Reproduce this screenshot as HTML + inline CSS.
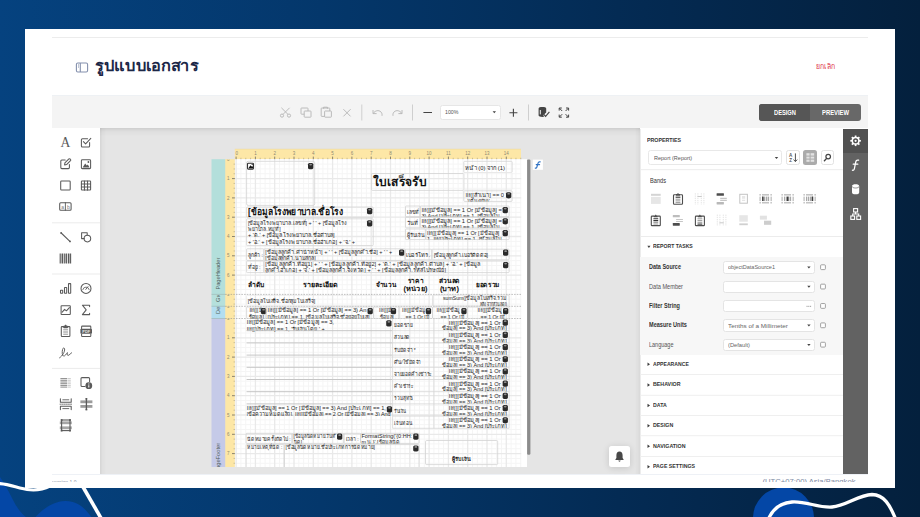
<!DOCTYPE html>
<html><head><meta charset="utf-8"><title>รูปแบบเอกสาร</title>
<style>
html,body{margin:0;padding:0}
body{width:920px;height:517px;overflow:hidden;position:relative;font-family:"Liberation Sans",sans-serif;background:linear-gradient(90deg,#05427f 0%,#04376b 35%,#042a52 70%,#04203d 100%)}
.b,.t,svg.a{position:absolute}
.b{box-sizing:border-box}
.t{line-height:1;white-space:nowrap;transform-origin:0 0}
svg.a{left:0;top:0;overflow:visible}
</style></head><body>
<svg class="a" width="920" height="517" viewBox="0 0 920 517"><path d="M0 477C6 486 9 492 13 500C17 508 22 515 30 520L0 520Z" fill="#0447a6"/><path d="M33 520C41 510 52 501.5 65 501C78 500.6 86 509 93.5 520Z" fill="#0447a6"/><path d="M-2 483.5C10 483.8 18 488.5 30 489.8C38 490.5 44 489 50 486" fill="none" stroke="#fff" stroke-width="3.1"/><path d="M82.5 486L101.5 519" fill="none" stroke="#fff" stroke-width="3.6"/><circle cx="783.5" cy="518" r="30.5" fill="#0447a6"/><path d="M768 520C772 510 780 503 792 502C806 501 818 508 832 507C846 506 858 495 872 494.5C884 494.5 890 505 896 520" fill="none" stroke="#fff" stroke-width="3.3"/></svg>
<div class="b" style="left:25px;top:28.5px;width:870px;height:459.5px;background:#fff"></div>
<div class="b" style="left:52px;top:36.6px;width:816px;height:1px;background:#ececec"></div>
<svg class="a" width="920" height="517" viewBox="0 0 920 517"><g fill="none" stroke="#8490ad" stroke-width="1.1"><rect x="76.4" y="63" width="11.2" height="9" rx="1.4"/><path d="M80.3 63V72M78 65H79M78 67H79"/></g></svg>
<svg class="a" width="920" height="517" viewBox="0 0 920 517" aria-label="รูปแบบเอกสาร"><text x="95.2" y="71.3" font-family="'Liberation Sans',sans-serif" font-size="15.4" font-weight="700" fill="#1c2747" textLength="103" lengthAdjust="spacingAndGlyphs">รูปแบบเอกสาร</text></svg>
<svg class="a" width="920" height="517" viewBox="0 0 920 517" aria-label="ยกเลิก"><text x="816.3" y="68.7" font-family="'Liberation Sans',sans-serif" font-size="7.4" fill="#dd2f46" textLength="18.6" lengthAdjust="spacingAndGlyphs">ยกเลิก</text></svg>
<div class="b" style="left:52px;top:95.1px;width:816px;height:33.3px;background:#f4f4f4;border-top:1px solid #eef1f4"></div>
<svg class="a" width="920" height="517" viewBox="0 0 920 517"><g fill="none" stroke="#b4b4b4" stroke-width="0.9"><circle cx="282" cy="115.6" r="1.6"/><circle cx="289" cy="115.6" r="1.6"/><path d="M283 114.4L289.6 107.8M288 114.4L281.4 107.8"/></g><g fill="none" stroke="#b4b4b4" stroke-width="0.9"><rect x="304.2" y="111" width="6.8" height="6.2" rx="0.6"/><path d="M304.2 114.2H301.6Q301 114.2 301 113.6V108.6Q301 108 301.6 108H307.4Q308 108 308 108.6V111"/></g><g fill="none" stroke="#b4b4b4" stroke-width="0.9"><rect x="324.6" y="111" width="6.8" height="6.2" rx="0.6"/><path d="M324.6 116.4H321.8Q321.2 116.4 321.2 115.8V108.6Q321.2 108 321.8 108H329.2Q329.8 108 329.8 108.6V111M323.6 108.8V107.2H327.4V108.8"/></g><path d="M343.4 109.2L350.6 116.4M350.6 109.2L343.4 116.4" fill="none" stroke="#b4b4b4" stroke-width="0.9"/><path d="M361.8 104.5V120.5M412.5 104.5V120.5M528.5 104.5V120.5" stroke="#cfcfcf" stroke-width="1"/><g fill="none" stroke="#b4b4b4" stroke-width="0.9"><path d="M373 110V113.6H376.6M373.2 113.4C375 110.6 378.6 109.6 381 112C382 113 382.2 114.4 382 115.8"/><path d="M402 110V113.6H398.4M401.8 113.4C400 110.6 396.4 109.6 394 112C393 113 392.8 114.4 393 115.8"/></g><path d="M423.4 112.5H432M509.4 112.7H517.4M513.4 108.7V116.7" stroke="#444" stroke-width="1.1" fill="none"/><g fill="#444"><path d="M538.6 108.4C538.6 107.5 540.4 107 542.4 107S546.2 107.5 546.2 108.4V112.4L543.2 115.2L544.4 116.6C543.8 116.8 543.1 116.9 542.4 116.9C540.4 116.9 538.6 116.4 538.6 115.5Z"/></g><path d="M540.3 110V114.4" stroke="#f5f5f5" stroke-width="1"/><path d="M543.8 114.4L545.6 116.4L549.4 111.8" fill="none" stroke="#444" stroke-width="1.1"/><g fill="none" stroke="#444" stroke-width="1"><path d="M559.2 110.6V108H561.8M559.4 108.2L562.2 111M568.6 110.6V108H566M568.4 108.2L565.6 111M559.2 114.6V117.2H561.8M559.4 117L562.2 114.2M568.6 114.6V117.2H566M568.4 117L565.6 114.2"/></g></svg>
<div class="b" style="left:440.2px;top:104.5px;width:60.4px;height:15.8px;background:#fff;border:1px solid #e6e6e6;border-radius:2.5px"></div>
<div class="t" style="left:445.2px;top:109.69px;font-size:5.8px;color:#555;transform:scaleX(0.903);">100%</div>
<svg class="a" width="920" height="517" viewBox="0 0 920 517"><path d="M492.6 111.2H496L494.3 113.2Z" fill="#444"/></svg>
<div class="b" style="left:759px;top:104.1px;width:102.1px;height:17.1px;background:#686868;border-radius:3px;overflow:hidden"><div class="b" style="left:0;top:0;width:51px;height:17.1px;background:#565656"></div></div>
<div class="t" style="left:773.5px;top:109.51px;font-size:6.6px;color:#fff;font-weight:700;transform:scaleX(0.869);">DESIGN</div>
<div class="t" style="left:822.2px;top:109.51px;font-size:6.6px;color:#fff;font-weight:700;transform:scaleX(0.89);">PREVIEW</div>
<div class="b" style="left:52px;top:128.5px;width:48.4px;height:345.2px;background:#fff"></div>
<svg class="a" width="920" height="517" viewBox="0 0 920 517"><path d="M52 222.8H100M52 274H100M52 368.4H100" stroke="#ebebeb" stroke-width="1"/><text x="65.5" y="147.4" font-family="Liberation Serif,serif" font-size="13.6" text-anchor="middle" fill="#5a5a5a">A</text><g fill="none" stroke="#5a5a5a" stroke-width="1.05" stroke-linejoin="round" stroke-linecap="round"><path d="M89.6 142.6V146Q89.6 147 88.6 147H82.4Q81.4 147 81.4 146V139.8Q81.4 138.8 82.4 138.8H87.6"/><path d="M83.4 141.6L85.6 143.9L90.8 138.4"/><path d="M69.4 164.4V167.6Q69.4 168.6 68.4 168.6H61.8Q60.8 168.6 60.8 167.6V161Q60.8 160 61.8 160H65.2"/><path d="M64.6 165L64.9 162.9L68.9 158.9Q69.5 158.5 70.1 159L70.6 159.5Q71 160.1 70.5 160.7L66.6 164.6Z"/><rect x="81.4" y="159.8" width="9.2" height="8.8" rx="0.9"/><rect x="60.7" y="180.9" width="9.5" height="9.2" rx="0.8"/><rect x="81.4" y="180.9" width="9.2" height="9.2" rx="0.6"/><path d="M84.45 180.9V190.1M87.55 180.9V190.1M81.4 183.95H90.6M81.4 187.05H90.6"/><rect x="59.7" y="202.7" width="11.4" height="7.6" rx="1"/><path d="M65.4 202.7V210.3" stroke-width="0.9"/><path d="M61.2 233L69.9 241.3"/><path d="M84.2 238.6H81.6V232.8H87.2V235"/><circle cx="87.4" cy="238.6" r="3.3"/><rect x="60.5" y="290.2" width="2.2" height="3" rx="0.3"/><rect x="64.5" y="287.4" width="2.2" height="5.8" rx="0.3"/><rect x="68.5" y="283.6" width="2.2" height="9.6" rx="0.3"/><circle cx="86" cy="288.4" r="5"/><path d="M82.8 289.6A3.3 3.3 0 0 1 89.2 289.6" stroke-width="0.8"/><path d="M85.8 289.4L88 286.6" stroke-width="0.9"/><rect x="61.1" y="305.7" width="9.2" height="8.7" rx="0.5"/><path d="M62.2 312.2L64.6 309.4L66.4 310.8L69.4 307.6"/><path d="M89.6 306.6V305.2H82.4L86.2 309.9L82.4 314.6H89.6V313.2"/><path d="M63.6 326.6H62Q61.3 326.6 61.3 327.3V335.8Q61.3 336.5 62 336.5H69.2Q69.9 336.5 69.9 335.8V327.3Q69.9 326.6 69.2 326.6H67.6"/><path d="M63.8 327.6V326.2H64.8L65.6 325.2L66.4 326.2H67.4V327.6Z" fill="#5a5a5a"/><path d="M63.6 329.6H67.6M63.6 331.2H67.6M63.6 332.8H67.6M63.6 334.4H67.6" stroke="#8a8a8a" stroke-width="0.7"/><path d="M81.6 328.6V326.8Q81.6 326.1 82.3 326.1H90.1Q90.8 326.1 90.8 326.8V328.6M81.6 334V335.8Q81.6 336.5 82.3 336.5H90.1Q90.8 336.5 90.8 335.8V334"/><path d="M59.6 357.8C62.4 356 65 351.6 64.6 349C64.4 347.6 63 347.6 62.6 349.4C62 352 62 355.4 63.4 356C64.8 356.6 66.6 353.6 67.4 352.6C67.2 354 67.2 355.6 68.2 355.4C69.4 355 70.4 353.6 71.6 352.8" stroke-width="0.95"/><path d="M85 386.4H82Q81 386.4 81 385.4V378.6Q81 377.6 82 377.6H88.6Q89.6 377.6 89.6 378.6V381.6"/><path d="M60.4 398.8V402.2H71.2V398.8M60.4 409.6V406.2H71.2V409.6"/><path d="M62.8 399.8H68.8M62.8 408.6H68.8" stroke-width="0.9"/><path d="M60 404.2H71.6" stroke-dasharray="1.1 1" stroke-width="0.8"/></g><path d="M82.6 167.4L85.2 163.6L86.8 165.6L87.8 164.6L89.6 167.4Z" fill="#5a5a5a"/><circle cx="88.4" cy="162" r="0.9" fill="#5a5a5a"/><text x="62.6" y="208.6" font-family="Liberation Sans,sans-serif" font-size="5" text-anchor="middle" fill="#777">a</text><text x="68.3" y="208.6" font-family="Liberation Sans,sans-serif" font-size="5" text-anchor="middle" fill="#777">b</text><circle cx="61.1" cy="232.9" r="0.9" fill="#5a5a5a"/><circle cx="70" cy="241.4" r="0.9" fill="#5a5a5a"/><path d="M60.2 253.6V263.4M62.5 253.6V263.4M64.3 253.6V263.4M66.6 253.6V263.4M68.5 253.6V263.4M70.6 253.6V263.4" stroke="#5a5a5a" stroke-width="1.1" fill="none"/><path d="M61.4 253.6V263.4M65.5 253.6V263.4M69.6 253.6V263.4" stroke="#5a5a5a" stroke-width="0.5" fill="none"/><rect x="80.4" y="328.8" width="11.6" height="5" rx="0.8" fill="#5a5a5a"/><text x="86.2" y="332.9" font-family="Liberation Sans,sans-serif" font-weight="700" font-size="3.9" text-anchor="middle" fill="#e8e8e8">PDF</text><path d="M60.4 378.6H67M60.4 380.3H67M60.4 382H67M60.4 383.7H67M60.4 385.4H67M60.4 387.1H67" stroke="#7c7c7c" stroke-width="0.9"/><path d="M67.4 378.6H70.8M67.4 380.3H70.8M67.4 382H70.8M67.4 383.7H70.8M67.4 385.4H70.8M67.4 387.1H70.8" stroke="#c4c4c4" stroke-width="0.9"/><circle cx="88.8" cy="385.7" r="3.4" fill="#5a5a5a"/><path d="M88.8 383.6V384.4M88.8 385.2V387.6" stroke="#fff" stroke-width="1.05"/><rect x="80.4" y="400.4" width="12" height="2.8" fill="#9b9b9b"/><rect x="80.4" y="405" width="12" height="2.8" fill="#9b9b9b"/><path d="M86.4 398.4V410" stroke="#5a5a5a" stroke-width="1.3"/><rect x="85.5" y="398" width="1.8" height="1.6" fill="#5a5a5a"/><rect x="85.5" y="408.8" width="1.8" height="1.6" fill="#5a5a5a"/><rect x="59.8" y="421.4" width="12" height="2.8" fill="#a6a6a6"/><rect x="59.8" y="426.4" width="12" height="2.8" fill="#a6a6a6"/><rect x="61.6" y="420" width="8.4" height="10.6" fill="none" stroke="#5a5a5a" stroke-width="1.1"/><rect x="60.7" y="419.1" width="1.8" height="1.8" fill="#5a5a5a"/><rect x="60.7" y="429.7" width="1.8" height="1.8" fill="#5a5a5a"/><rect x="69.1" y="419.1" width="1.8" height="1.8" fill="#5a5a5a"/><rect x="69.1" y="429.7" width="1.8" height="1.8" fill="#5a5a5a"/></svg>
<div class="b" style="left:640.4px;top:128.5px;width:202.5px;height:345.2px;background:#fff;border-left:1px solid #ececec"></div>
<div class="b" style="left:842.9px;top:128.5px;width:25.1px;height:345.2px;background:#626262"><div class="b" style="left:0;top:0;width:25.1px;height:24px;background:#515151"></div></div>
<div class="b" style="left:648.3px;top:150.3px;width:134.2px;height:14.4px;background:#fff;border:1px solid #e8e8e8;border-radius:2.5px"></div>
<div class="b" style="left:785.8px;top:150.3px;width:13.8px;height:14.4px;background:#fff;border:1px solid #e2e2e2;border-radius:2.5px"></div>
<div class="b" style="left:803.4px;top:150.3px;width:13.8px;height:14.4px;background:#ababab;border-radius:2.5px"></div>
<div class="b" style="left:820.5px;top:150.3px;width:13.8px;height:14.4px;background:#fff;border:1px solid #e2e2e2;border-radius:2.5px"></div>
<div class="b" style="left:640.4px;top:257.3px;width:202.5px;height:97.6px;background:#f7f7f7"></div>
<div class="b" style="left:722.5px;top:261.2px;width:92.7px;height:12.4px;background:#fff;border:1px solid #e4e4e4;border-radius:2.5px"></div>
<div class="t" style="left:648.8px;top:264.27px;font-size:6.3px;color:#333;font-weight:700;transform:scaleX(0.87);">Data Source</div>
<div class="t" style="left:727.5px;top:264.42px;font-size:6px;color:#666;transform:scaleX(0.921);">objectDataSource1</div>
<div class="b" style="left:722.5px;top:280.57px;width:92.7px;height:12.4px;background:#fff;border:1px solid #e4e4e4;border-radius:2.5px"></div>
<div class="t" style="left:648.8px;top:283.64px;font-size:6.3px;color:#555;transform:scaleX(0.891);">Data Member</div>
<div class="b" style="left:722.5px;top:299.94px;width:92.7px;height:12.4px;background:#fff;border:1px solid #e4e4e4;border-radius:2.5px"></div>
<div class="t" style="left:648.8px;top:303.01px;font-size:6.3px;color:#333;font-weight:700;transform:scaleX(0.877);">Filter String</div>
<div class="b" style="left:722.5px;top:319.31px;width:92.7px;height:12.4px;background:#fff;border:1px solid #e4e4e4;border-radius:2.5px"></div>
<div class="t" style="left:648.8px;top:322.38px;font-size:6.3px;color:#333;font-weight:700;transform:scaleX(0.882);">Measure Units</div>
<div class="t" style="left:727.5px;top:322.53px;font-size:6px;color:#666;transform:scaleX(1.058);">Tenths of a Millimeter</div>
<div class="b" style="left:722.5px;top:338.68px;width:92.7px;height:12.4px;background:#fff;border:1px solid #e4e4e4;border-radius:2.5px"></div>
<div class="t" style="left:648.8px;top:341.75px;font-size:6.3px;color:#555;transform:scaleX(0.874);">Language</div>
<div class="t" style="left:727.5px;top:341.9px;font-size:6px;color:#666;transform:scaleX(0.956);">(Default)</div>
<svg class="a" width="920" height="517" viewBox="0 0 920 517"><g stroke="#fff" stroke-width="1.7" fill="none"><path d="M858.80 140.80L860.90 140.80" /><path d="M857.86 143.06L859.35 144.55" /><path d="M855.60 144.00L855.60 146.10" /><path d="M853.34 143.06L851.85 144.55" /><path d="M852.40 140.80L850.30 140.80" /><path d="M853.34 138.54L851.85 137.05" /><path d="M855.60 137.60L855.60 135.50" /><path d="M857.86 138.54L859.35 137.05" /></g><circle cx="855.6" cy="140.8" r="3.3" fill="none" stroke="#fff" stroke-width="1.5"/><circle cx="855.6" cy="140.8" r="1.1" fill="#fff"/><path d="M858.6 160.2C856.6 159.6 855.9 160.8 855.6 162.6L854.4 168.6C854.1 170 853.4 170.6 852.4 170.2M853.2 164.2H857.8" fill="none" stroke="#fff" stroke-width="1.25" stroke-linecap="round"/><path d="M852 186.2C852 184.9 853.6 184.3 855.6 184.3S859.2 184.9 859.2 186.2V192.4C859.2 193.7 857.6 194.3 855.6 194.3S852 193.7 852 192.4Z" fill="#fff"/><path d="M852 186.4C852.4 187.6 854 188 855.6 188S858.8 187.6 859.2 186.4" fill="none" stroke="#626262" stroke-width="0.7"/><g fill="none" stroke="#fff" stroke-width="1.1"><rect x="853.6" y="208.6" width="4" height="3.4"/><rect x="850.8" y="216" width="3.8" height="3.4"/><rect x="856.8" y="216" width="3.8" height="3.4"/><path d="M855.6 212V214H852.7V216M855.6 214H858.7V216"/></g><path d="M774.8 156.9H778.2L776.5 158.9Z" fill="#444"/><text x="789.1" y="157.2" font-family="Liberation Sans,sans-serif" font-size="4.6" font-weight="700" fill="#555">A</text><text x="789.2" y="162.2" font-family="Liberation Sans,sans-serif" font-size="4.6" font-weight="700" fill="#555">Z</text><path d="M795.4 153.4V161.4M793.6 159.6L795.4 161.6L797.2 159.6" fill="none" stroke="#444" stroke-width="0.95"/><g fill="#e2e2e2"><rect x="806.4" y="153.2" width="3.2" height="2.4"/><rect x="810.6" y="153.2" width="3.6" height="2.4"/><rect x="806.4" y="156.6" width="3.2" height="2"/><rect x="810.6" y="156.6" width="3.6" height="2"/><rect x="806.4" y="159.6" width="3.2" height="2.2"/><rect x="810.6" y="159.6" width="3.6" height="2.2"/></g><circle cx="828.2" cy="156.6" r="2.3" fill="none" stroke="#444" stroke-width="1.2"/><path d="M826.4 158.6L824.4 160.8" stroke="#444" stroke-width="1.4" stroke-linecap="round"/><path d="M640.4 169.7H842.9M640.4 236.5H842.9" stroke="#ececec" stroke-width="1"/><rect x="651" y="193.8" width="9.7" height="2" fill="#d4d4d4"/><rect x="651" y="196.9" width="9.7" height="7" fill="#e6e6e6"/><path d="M676.2 194.7H674.2Q673.5 194.7 673.5 195.4V203.5Q673.5 204.2 674.2 204.2H681.8Q682.5 204.2 682.5 203.5V195.4Q682.5 194.7 681.8 194.7H679.8" fill="none" stroke="#4d4d4d" stroke-width="1.1"/><path d="M676 195.8V194.1H677.1L678 193L678.9 194.1H680V195.8Z" fill="#4d4d4d"/><path d="M675.6 197.2H680.4" stroke="#333" stroke-width="1.1"/><path d="M675.6 199.2H680.4M675.6 200.9H680.4M675.6 202.6H680.4" stroke="#9a9a9a" stroke-width="1"/><g stroke="#dcdcdc" stroke-width="0.8" stroke-dasharray="1.3 0.9" fill="none"><path d="M695.3 193.3V204.7M697.9 193.3V204.7M701.3 193.3V204.7M703.9 193.3V204.7"/></g><path d="M697.5 196.5H701.7" stroke="#c9c9c9" stroke-width="1"/><rect x="716.6" y="193.2" width="7.3" height="2.6" rx="0.4" fill="#4d4d4d"/><path d="M720.2 198.3H726.8M720.2 200.4H726.8" stroke="#c6c6c6" stroke-width="1.2"/><rect x="716.6" y="201.9" width="7.3" height="2.6" rx="0.4" fill="#b9b9b9"/><rect x="739.8" y="194.3" width="7.6" height="8.9" fill="none" stroke="#c4c4c4" stroke-width="1"/><path d="M742 197H745.2" stroke="#c9c9c9" stroke-width="0.9"/><path d="M742 198.8H745.2M742 200.5H745.2" stroke="#e2e2e2" stroke-width="0.9"/><g fill="#c4c4c4"><rect x="759.4" y="194" width="1.5" height="1.6"/><rect x="762" y="194" width="7" height="1.6"/><rect x="770.4" y="194" width="1.5" height="1.6"/><rect x="759.4" y="201.9" width="1.5" height="1.6"/><rect x="762" y="201.9" width="7" height="1.6"/><rect x="770.4" y="201.9" width="1.5" height="1.6"/><rect x="759.4" y="196.6" width="1.4" height="4.4"/><rect x="770.5" y="196.6" width="1.4" height="4.4"/><rect x="762" y="196.6" width="1.3" height="4.4" fill="#a8a8a8"/><rect x="764" y="196.6" width="1.3" height="4.4" fill="#a8a8a8"/><rect x="766" y="196.6" width="1.3" height="4.4" fill="#a8a8a8"/><rect x="767.8" y="196.6" width="1.3" height="4.4" fill="#a8a8a8"/><rect x="762.1" y="196.6" width="1.5" height="4.4" fill="#3d3d3d"/></g><g fill="#c4c4c4"><rect x="781.4" y="194" width="1.5" height="1.6"/><rect x="784" y="194" width="7" height="1.6"/><rect x="792.4" y="194" width="1.5" height="1.6"/><rect x="781.4" y="201.9" width="1.5" height="1.6"/><rect x="784" y="201.9" width="7" height="1.6"/><rect x="792.4" y="201.9" width="1.5" height="1.6"/><rect x="781.4" y="196.6" width="1.4" height="4.4"/><rect x="792.5" y="196.6" width="1.4" height="4.4"/><rect x="784" y="196.6" width="1.3" height="4.4" fill="#a8a8a8"/><rect x="786" y="196.6" width="1.3" height="4.4" fill="#a8a8a8"/><rect x="788" y="196.6" width="1.3" height="4.4" fill="#a8a8a8"/><rect x="789.8" y="196.6" width="1.3" height="4.4" fill="#a8a8a8"/><rect x="786.9" y="196.6" width="1.5" height="4.4" fill="#3d3d3d"/></g><g fill="#c4c4c4"><rect x="803.4" y="194" width="1.5" height="1.6"/><rect x="806" y="194" width="7" height="1.6"/><rect x="814.4" y="194" width="1.5" height="1.6"/><rect x="803.4" y="201.9" width="1.5" height="1.6"/><rect x="806" y="201.9" width="7" height="1.6"/><rect x="814.4" y="201.9" width="1.5" height="1.6"/><rect x="803.4" y="196.6" width="1.4" height="4.4"/><rect x="814.5" y="196.6" width="1.4" height="4.4"/><rect x="806" y="196.6" width="1.3" height="4.4" fill="#a8a8a8"/><rect x="808" y="196.6" width="1.3" height="4.4" fill="#a8a8a8"/><rect x="810" y="196.6" width="1.3" height="4.4" fill="#a8a8a8"/><rect x="811.8" y="196.6" width="1.3" height="4.4" fill="#a8a8a8"/><rect x="811.7" y="196.6" width="1.5" height="4.4" fill="#3d3d3d"/></g><path d="M654 216.1H652Q651.3 216.1 651.3 216.8V224.9Q651.3 225.6 652 225.6H659.6Q660.3 225.6 660.3 224.9V216.8Q660.3 216.1 659.6 216.1H657.6" fill="none" stroke="#4d4d4d" stroke-width="1.1"/><path d="M653.8 217.2V215.5H654.9L655.8 214.4L656.7 215.5H657.8V217.2Z" fill="#4d4d4d"/><path d="M653.4 218.8H658.2M653.4 220.6H658.2" stroke="#333" stroke-width="1.1"/><path d="M653.4 222.4H658.2M653.4 224H658.2" stroke="#9a9a9a" stroke-width="1"/><rect x="672.8" y="214.9" width="7" height="2.4" rx="0.4" fill="#bdbdbd"/><path d="M676.1 219.5H682.9M676.1 221.5H682.9" stroke="#c6c6c6" stroke-width="1.2"/><rect x="672.8" y="223" width="7" height="2.7" rx="0.4" fill="#4d4d4d"/><path d="M698.1 216.1H696.1Q695.4 216.1 695.4 216.8V224.9Q695.4 225.6 696.1 225.6H703.7Q704.4 225.6 704.4 224.9V216.8Q704.4 216.1 703.7 216.1H701.7" fill="none" stroke="#4d4d4d" stroke-width="1.1"/><path d="M697.9 217.2V215.5H699L699.9 214.4L700.8 215.5H701.9V217.2Z" fill="#4d4d4d"/><path d="M697.5 218.8H702.3M697.5 220.6H702.3M697.5 222.3H702.3" stroke="#9a9a9a" stroke-width="1"/><path d="M697.5 224.1H702.3" stroke="#333" stroke-width="1.1"/><g stroke="#dcdcdc" stroke-width="0.8" stroke-dasharray="1.3 0.9" fill="none"><path d="M717.3 214.6V226M719.9 214.6V226M723.3 214.6V226M725.9 214.6V226"/></g><path d="M719.5 222.8H723.7" stroke="#c9c9c9" stroke-width="1"/><rect x="739.3" y="215.2" width="8.5" height="6.5" fill="#e6e6e6"/><rect x="739.3" y="223.4" width="8.5" height="1.8" fill="#d0d0d0"/><rect x="759.9" y="215.7" width="7" height="3.9" fill="#e2e2e2"/><rect x="764" y="220.7" width="7.2" height="4.1" fill="#cdcdcd"/><path d="M647.3 245.8H650.5L648.9 247.9Z" fill="#444"/><path d="M647.5 362.4V366L650 364.2Z" fill="#3c3c3c"/><path d="M647.5 383.2V386.8L650 385Z" fill="#3c3c3c"/><path d="M647.5 403.7V407.3L650 405.5Z" fill="#3c3c3c"/><path d="M647.5 423.9V427.5L650 425.7Z" fill="#3c3c3c"/><path d="M647.5 444.5V448.1L650 446.3Z" fill="#3c3c3c"/><path d="M647.5 465V468.6L650 466.8Z" fill="#3c3c3c"/><path d="M640.4 374.5H842.9M640.4 395.3H842.9M640.4 415.5H842.9M640.4 435.7H842.9M640.4 456.5H842.9" stroke="#efefef" stroke-width="1"/><path d="M807.2 266.5H810.6L808.9 268.5Z" fill="#444"/><rect x="820.6" y="264.8" width="4.8" height="4.8" rx="0.9" fill="#fff" stroke="#8c8c8c" stroke-width="0.8"/><path d="M807.2 285.87H810.6L808.9 287.87Z" fill="#444"/><rect x="820.6" y="284.17" width="4.8" height="4.8" rx="0.9" fill="#fff" stroke="#8c8c8c" stroke-width="0.8"/><path d="M806.6 306.34H807.5M808.4 306.34H809.3M810.2 306.34H811.1" stroke="#777" stroke-width="0.9"/><rect x="820.6" y="303.54" width="4.8" height="4.8" rx="0.9" fill="#fff" stroke="#8c8c8c" stroke-width="0.8"/><path d="M807.2 324.61H810.6L808.9 326.61Z" fill="#444"/><rect x="820.6" y="322.91" width="4.8" height="4.8" rx="0.9" fill="#fff" stroke="#8c8c8c" stroke-width="0.8"/><path d="M807.2 343.98H810.6L808.9 345.98Z" fill="#444"/><rect x="820.6" y="342.28" width="4.8" height="4.8" rx="0.9" fill="#fff" stroke="#8c8c8c" stroke-width="0.8"/></svg>
<div class="t" style="left:646.8px;top:137.7px;font-size:5.2px;color:#333;font-weight:700;transform:scaleX(1.02);">PROPERTIES</div>
<div class="t" style="left:653.8px;top:155.42px;font-size:6px;color:#555;transform:scaleX(0.916);">Report (Report)</div>
<div class="t" style="left:649.9px;top:177.9px;font-size:6.5px;color:#333;transform:scaleX(0.868);">Bands</div>
<div class="t" style="left:653px;top:244.41px;font-size:5.3px;color:#333;font-weight:700;transform:scaleX(0.968);">REPORT TASKS</div>
<div class="t" style="left:653px;top:361.61px;font-size:5.3px;color:#333;font-weight:700;transform:scaleX(0.965);">APPEARANCE</div>
<div class="t" style="left:653px;top:382.41px;font-size:5.3px;color:#333;font-weight:700;">BEHAVIOR</div>
<div class="t" style="left:653px;top:402.91px;font-size:5.3px;color:#333;font-weight:700;transform:scaleX(0.983);">DATA</div>
<div class="t" style="left:653px;top:423.11px;font-size:5.3px;color:#333;font-weight:700;">DESIGN</div>
<div class="t" style="left:653px;top:443.71px;font-size:5.3px;color:#333;font-weight:700;">NAVIGATION</div>
<div class="t" style="left:653px;top:464.21px;font-size:5.3px;color:#333;font-weight:700;transform:scaleX(0.986);">PAGE SETTINGS</div>
<div class="b" style="left:52px;top:473.7px;width:816px;height:1px;background:#eef1f6"></div>
<div class="b" style="left:52px;top:474.7px;width:820px;height:7.4px;overflow:hidden"><div class="t" style="left:710.5px;top:3.7px;font-size:7.67px;color:#7d8aa3">(UTC+07:00) Asia/Bangkok</div><div class="t" style="left:0px;top:5px;font-size:5px;color:#8a93a6">version 1.0</div></div>
<div class="b" style="left:100.2px;top:128.4px;width:540.2px;height:345.3px;background:linear-gradient(180deg,rgba(0,0,0,.1) 0,rgba(0,0,0,.035) 3px,rgba(0,0,0,0) 8px),linear-gradient(90deg,rgba(0,0,0,.075) 0,rgba(0,0,0,.025) 2.5px,rgba(0,0,0,0) 6px),linear-gradient(270deg,rgba(0,0,0,.05) 0,rgba(0,0,0,0) 5px),#e5e5e5"></div>
<div class="b" style="left:608.8px;top:445.9px;width:21.5px;height:21.5px;background:#fff;border-radius:2.5px;box-shadow:0 1px 7px rgba(0,0,0,.14)"></div>
<svg class="a" width="920" height="517" viewBox="0 0 920 517"><clipPath id="cs"><rect x="100.4" y="128.5" width="540" height="338.5"/></clipPath><g clip-path="url(#cs)"><rect x="234.8" y="149" width="286.2" height="10.2" fill="#fde7a6"/><path d="M234.8 149.2H521" stroke="#ecdca6" stroke-width="0.6"/><rect x="225.1" y="159.2" width="9.8" height="307.8" fill="#fde7a6"/><rect x="211.5" y="159.2" width="13.7" height="135.2" fill="#b3dfdb"/><rect x="211.5" y="294.4" width="13.7" height="11.9" fill="#b5e0dc"/><rect x="211.5" y="306.3" width="13.7" height="12.2" fill="#b3def0"/><rect x="211.5" y="318.5" width="13.7" height="148.5" fill="#c5cae8"/><path d="M211.5 294.4H225.2M211.5 306.3H225.2M211.5 318.5H225.2" stroke="#93b3b0" stroke-width="0.6"/><rect x="234.9" y="159.2" width="292.1" height="307.8" fill="#fff"/><path d="M240.92 159.3V467M245.75 159.3V467M250.57 159.3V467M260.23 159.3V467M265.05 159.3V467M269.88 159.3V467M279.52 159.3V467M284.35 159.3V467M289.18 159.3V467M298.82 159.3V467M303.65 159.3V467M308.48 159.3V467M318.12 159.3V467M322.95 159.3V467M327.77 159.3V467M337.43 159.3V467M342.25 159.3V467M347.07 159.3V467M356.73 159.3V467M361.55 159.3V467M366.38 159.3V467M376.02 159.3V467M380.85 159.3V467M385.68 159.3V467M395.32 159.3V467M400.15 159.3V467M404.98 159.3V467M414.62 159.3V467M419.45 159.3V467M424.27 159.3V467M433.93 159.3V467M438.75 159.3V467M443.57 159.3V467M453.23 159.3V467M458.05 159.3V467M462.88 159.3V467M472.52 159.3V467M477.35 159.3V467M482.18 159.3V467M491.83 159.3V467M496.65 159.3V467M501.48 159.3V467M511.12 159.3V467M515.95 159.3V467M520.77 159.3V467M235 164.12H521.2M235 168.95H521.2M235 173.78H521.2M235 183.43H521.2M235 188.25H521.2M235 193.08H521.2M235 202.73H521.2M235 207.55H521.2M235 212.38H521.2M235 222.03H521.2M235 226.85H521.2M235 231.68H521.2M235 241.33H521.2M235 246.15H521.2M235 250.98H521.2M235 260.62H521.2M235 265.45H521.2M235 270.28H521.2M235 279.93H521.2M235 284.75H521.2M235 289.58H521.2M235 299.22H521.2M235 304.05H521.2M235 311.12H521.2M235 315.95H521.2M235 323.32H521.2M235 328.15H521.2M235 332.98H521.2M235 342.62H521.2M235 347.45H521.2M235 352.27H521.2M235 361.93H521.2M235 366.75H521.2M235 371.57H521.2M235 381.23H521.2M235 386.05H521.2M235 390.88H521.2M235 400.52H521.2M235 405.35H521.2M235 410.18H521.2M235 419.82H521.2M235 424.65H521.2M235 429.48H521.2M235 439.12H521.2M235 443.95H521.2M235 448.77H521.2M235 458.43H521.2M235 463.25H521.2" stroke="#f5f5f5" stroke-width="1" fill="none"/><path d="M236.1 159.3V467M255.4 159.3V467M274.7 159.3V467M294 159.3V467M313.3 159.3V467M332.6 159.3V467M351.9 159.3V467M371.2 159.3V467M390.5 159.3V467M409.8 159.3V467M429.1 159.3V467M448.4 159.3V467M467.7 159.3V467M487 159.3V467M506.3 159.3V467M235 178.6H521.2M235 197.9H521.2M235 217.2H521.2M235 236.5H521.2M235 255.8H521.2M235 275.1H521.2M235 337.8H521.2M235 357.1H521.2M235 376.4H521.2M235 395.7H521.2M235 415H521.2M235 434.3H521.2M235 453.6H521.2" stroke="#e9e9e9" stroke-width="1.3" fill="none"/><path d="M240.92 157.8V159.2M245.75 157.8V159.2M250.57 157.8V159.2M260.23 157.8V159.2M265.05 157.8V159.2M269.88 157.8V159.2M279.52 157.8V159.2M284.35 157.8V159.2M289.18 157.8V159.2M298.82 157.8V159.2M303.65 157.8V159.2M308.48 157.8V159.2M318.12 157.8V159.2M322.95 157.8V159.2M327.77 157.8V159.2M337.43 157.8V159.2M342.25 157.8V159.2M347.07 157.8V159.2M356.73 157.8V159.2M361.55 157.8V159.2M366.38 157.8V159.2M376.02 157.8V159.2M380.85 157.8V159.2M385.68 157.8V159.2M395.32 157.8V159.2M400.15 157.8V159.2M404.98 157.8V159.2M414.62 157.8V159.2M419.45 157.8V159.2M424.27 157.8V159.2M433.93 157.8V159.2M438.75 157.8V159.2M443.57 157.8V159.2M453.23 157.8V159.2M458.05 157.8V159.2M462.88 157.8V159.2M472.52 157.8V159.2M477.35 157.8V159.2M482.18 157.8V159.2M491.83 157.8V159.2M496.65 157.8V159.2M501.48 157.8V159.2M511.12 157.8V159.2M515.95 157.8V159.2M520.77 157.8V159.2M233.6 164.12H234.9M233.6 168.95H234.9M233.6 173.78H234.9M233.6 183.43H234.9M233.6 188.25H234.9M233.6 193.08H234.9M233.6 202.73H234.9M233.6 207.55H234.9M233.6 212.38H234.9M233.6 222.03H234.9M233.6 226.85H234.9M233.6 231.68H234.9M233.6 241.33H234.9M233.6 246.15H234.9M233.6 250.98H234.9M233.6 260.62H234.9M233.6 265.45H234.9M233.6 270.28H234.9M233.6 279.93H234.9M233.6 284.75H234.9M233.6 289.58H234.9M233.6 299.22H234.9M233.6 304.05H234.9M233.6 311.12H234.9M233.6 315.95H234.9M233.6 323.32H234.9M233.6 328.15H234.9M233.6 332.98H234.9M233.6 342.62H234.9M233.6 347.45H234.9M233.6 352.27H234.9M233.6 361.93H234.9M233.6 366.75H234.9M233.6 371.57H234.9M233.6 381.23H234.9M233.6 386.05H234.9M233.6 390.88H234.9M233.6 400.52H234.9M233.6 405.35H234.9M233.6 410.18H234.9M233.6 419.82H234.9M233.6 424.65H234.9M233.6 429.48H234.9M233.6 439.12H234.9M233.6 443.95H234.9M233.6 448.77H234.9M233.6 458.43H234.9M233.6 463.25H234.9" stroke="#b9ad8a" stroke-width="0.8" fill="none"/><path d="M236.1 156.6V159.2M255.4 156.6V159.2M274.7 156.6V159.2M294 156.6V159.2M313.3 156.6V159.2M332.6 156.6V159.2M351.9 156.6V159.2M371.2 156.6V159.2M390.5 156.6V159.2M409.8 156.6V159.2M429.1 156.6V159.2M448.4 156.6V159.2M467.7 156.6V159.2M487 156.6V159.2M506.3 156.6V159.2M232 178.6H234.9M232 197.9H234.9M232 217.2H234.9M232 236.5H234.9M232 255.8H234.9M232 275.1H234.9M232 337.8H234.9M232 357.1H234.9M232 376.4H234.9M232 395.7H234.9M232 415H234.9M232 434.3H234.9M232 453.6H234.9" stroke="#7d7766" stroke-width="0.9" fill="none"/><g font-family="Liberation Sans,sans-serif" font-size="4.5" fill="#8f8973"><text x="236.7" y="154.9" text-anchor="middle">0</text><text x="255.4" y="154.9" text-anchor="middle">1</text><text x="274.7" y="154.9" text-anchor="middle">2</text><text x="294" y="154.9" text-anchor="middle">3</text><text x="313.3" y="154.9" text-anchor="middle">4</text><text x="332.6" y="154.9" text-anchor="middle">5</text><text x="351.9" y="154.9" text-anchor="middle">6</text><text x="371.2" y="154.9" text-anchor="middle">7</text><text x="390.5" y="154.9" text-anchor="middle">8</text><text x="409.8" y="154.9" text-anchor="middle">9</text><text x="429.1" y="154.9" text-anchor="middle">10</text><text x="448.4" y="154.9" text-anchor="middle">11</text><text x="467.7" y="154.9" text-anchor="middle">12</text><text x="487" y="154.9" text-anchor="middle">13</text><text x="506.3" y="154.9" text-anchor="middle">14</text><clipPath id="cz0"><rect x="225" y="159.6" width="10" height="10"/></clipPath><g clip-path="url(#cz0)"><text x="228.2" y="161.05" text-anchor="middle">0</text></g><clipPath id="cz1"><rect x="225" y="294.7" width="10" height="10"/></clipPath><g clip-path="url(#cz1)"><text x="228.2" y="296.15" text-anchor="middle">0</text></g><clipPath id="cz2"><rect x="225" y="306.6" width="10" height="10"/></clipPath><g clip-path="url(#cz2)"><text x="228.2" y="308.05" text-anchor="middle">0</text></g><clipPath id="cz3"><rect x="225" y="318.8" width="10" height="10"/></clipPath><g clip-path="url(#cz3)"><text x="228.2" y="320.25" text-anchor="middle">0</text></g><text x="228.2" y="180.2" text-anchor="middle">1</text><text x="228.2" y="199.5" text-anchor="middle">2</text><text x="228.2" y="218.8" text-anchor="middle">3</text><text x="228.2" y="238.1" text-anchor="middle">4</text><text x="228.2" y="257.4" text-anchor="middle">5</text><text x="228.2" y="276.7" text-anchor="middle">6</text><text x="228.2" y="339.4" text-anchor="middle">1</text><text x="228.2" y="358.7" text-anchor="middle">2</text><text x="228.2" y="378" text-anchor="middle">3</text><text x="228.2" y="397.3" text-anchor="middle">4</text><text x="228.2" y="416.6" text-anchor="middle">5</text><text x="228.2" y="435.9" text-anchor="middle">6</text><text x="228.2" y="455.2" text-anchor="middle">7</text></g><clipPath id="cb1"><rect x="211.5" y="160.2" width="13.7" height="134.2"/></clipPath><g clip-path="url(#cb1)"><text transform="translate(220 289.6) rotate(-90)" font-family="Liberation Sans,sans-serif" font-size="5.7" fill="#52625f">PageHeader</text></g><clipPath id="cb2"><rect x="211.5" y="294.9" width="13.7" height="11.4"/></clipPath><g clip-path="url(#cb2)"><text transform="translate(220 302) rotate(-90)" font-family="Liberation Sans,sans-serif" font-size="5.7" fill="#52625f">GroupHeader1</text></g><clipPath id="cb3"><rect x="211.5" y="306.8" width="13.7" height="11.7"/></clipPath><g clip-path="url(#cb3)"><text transform="translate(220 313.9) rotate(-90)" font-family="Liberation Sans,sans-serif" font-size="5.7" fill="#52625f">Detail</text></g><clipPath id="cb4"><rect x="211.5" y="319.5" width="13.7" height="147.5"/></clipPath><g clip-path="url(#cb4)"><text transform="translate(220 472.7) rotate(-90)" font-family="Liberation Sans,sans-serif" font-size="5.7" fill="#52625f">PageFooter</text></g><path d="M225.2 294.4H521.2M225.2 306.3H521.2M225.2 318.5H521.2" stroke="#909090" stroke-width="0.6" stroke-dasharray="1.5 1.2" fill="none"/><rect x="527.1" y="159.4" width="3.3" height="295.4" rx="1.2" fill="#8b8b8b"/><rect x="532.8" y="159.6" width="10.1" height="10.2" fill="#fff"/><path d="M540.2 161.9C538.7 161.5 538.2 162.4 537.9 163.6L536.9 167C536.6 168 536 168.4 535.3 168.1M536.2 164.6H539.6" fill="none" stroke="#2f72c4" stroke-width="1.15" stroke-linecap="round"/><path d="M619.5 451.6C617.5 451.6 616.4 453.2 616.4 455.2V458L615.4 459.4V460H623.6V459.4L622.6 458V455.2C622.6 453.2 621.5 451.6 619.5 451.6ZM618.4 460.6H620.6C620.6 461.3 620.1 461.8 619.5 461.8S618.4 461.3 618.4 460.6Z" fill="#484848"/><defs><g id="db"><path d="M0 1.3C0 .45 1.2 0 2.65 0S5.3 .45 5.3 1.3V4.9C5.3 5.75 4.1 6.2 2.65 6.2S0 5.75 0 4.9Z" fill="#2a2a2a"/><ellipse cx="2.65" cy="1.55" rx="1.35" ry=".85" fill="#8e8e8e"/></g></defs><g fill="#1e1e1e" font-family="'Liberation Sans',sans-serif"><rect x="246.6" y="161.3" width="68.1" height="44.1" fill="none" stroke="#d3d3d3" stroke-width="0.8" rx="1.5"/><rect x="247.5" y="163.2" width="6" height="6" rx="0.9" fill="#fff" stroke="#333" stroke-width="1.1"/><path d="M248.2 168.5L250.5 165.2L251.6 166.6L252.3 165.9L253 167.2V168.5Z" fill="#111"/><circle cx="252.2" cy="164.6" r="0.65" fill="#111"/><use href="#db" x="308" y="163"/><rect x="371.6" y="173.5" width="92.2" height="16.9" fill="none" stroke="#d3d3d3" stroke-width="0.8" rx="0.8"/><text x="373.2" y="186.1" font-size="12.3" font-weight="700" fill="#111" textLength="53.6" lengthAdjust="spacingAndGlyphs">ใบเสร็จรับ</text><rect x="463.8" y="161.3" width="48.3" height="11.2" fill="none" stroke="#d3d3d3" stroke-width="0.8" rx="0.8"/><text x="465.4" y="169.9" font-size="5.7" textLength="39.6" lengthAdjust="spacingAndGlyphs">หน้า (0) จาก (1)</text><rect x="463.8" y="172.5" width="48.3" height="17.3" fill="none" stroke="#ececec" stroke-width="0.8" rx="0.8"/><rect x="463.8" y="190.8" width="48.3" height="10.6" fill="none" stroke="#d3d3d3" stroke-width="0.8" rx="0.8"/><clipPath id="c1"><rect x="463.8" y="190.8" width="48.3" height="10.6"/></clipPath><g clip-path="url(#c1)"><text x="465.5" y="196.9" font-size="5.5" textLength="38.5" lengthAdjust="spacingAndGlyphs">IIf([สำเนา] == 0</text><text x="467.4" y="203" font-size="5.4" textLength="22.4" lengthAdjust="spacingAndGlyphs">'(ต้นฉบับ)'</text></g><use href="#db" x="506" y="192.2"/><rect x="246.6" y="207" width="126.6" height="10.2" fill="none" stroke="#d3d3d3" stroke-width="0.8" rx="0.8"/><text x="248" y="215.3" font-size="9.6" font-weight="700" fill="#111" textLength="95.2" lengthAdjust="spacingAndGlyphs">[ข้อมูลโรงพยาบาล.ชื่อโรง</text><use href="#db" x="367" y="208"/><rect x="246.6" y="218.8" width="126.6" height="26.8" fill="none" stroke="#d3d3d3" stroke-width="0.8" rx="0.8"/><text x="248" y="224.9" font-size="5.4" textLength="99" lengthAdjust="spacingAndGlyphs">[ข้อมูลโรงพยาบาล.เลขที่] + ' ' + [ข้อมูลโรง</text><text x="248" y="230.9" font-size="5.4" textLength="32.6" lengthAdjust="spacingAndGlyphs">พยาบาล.หมู่ที่]</text><text x="248" y="237.1" font-size="5.4" textLength="86.6" lengthAdjust="spacingAndGlyphs">+ 'ต.' + [ข้อมูลโรงพยาบาล.ชื่อตำบล]</text><text x="248" y="243.5" font-size="5.4" textLength="107.1" lengthAdjust="spacingAndGlyphs">+ 'อ.' + [ข้อมูลโรงพยาบาล.ชื่ออำเภอ] + 'จ.' +</text><use href="#db" x="367" y="220.3"/><rect x="405.5" y="206" width="14.6" height="10.8" fill="none" stroke="#d3d3d3" stroke-width="0.8" rx="0.8"/><rect x="420.1" y="206" width="89" height="10.8" fill="none" stroke="#d3d3d3" stroke-width="0.8" rx="0.8"/><text x="407" y="213.5" font-size="5.4" textLength="12.2" lengthAdjust="spacingAndGlyphs">เลขที่</text><clipPath id="c2"><rect x="420.1" y="206" width="89" height="10.8"/></clipPath><g clip-path="url(#c2)"><text x="421.4" y="211.5" font-size="5.5" textLength="80.5" lengthAdjust="spacingAndGlyphs">IIf([[มีข้อมูล] == 1 Or [มีข้อมูล] =</text><text x="421.4" y="217.6" font-size="5.5" textLength="77.9" lengthAdjust="spacingAndGlyphs">3) And [ประเภท] == 1, [ข้อมูลใบ</text></g><use href="#db" x="502.6" y="207"/><rect x="405.5" y="217.2" width="14.6" height="10.6" fill="none" stroke="#d3d3d3" stroke-width="0.8" rx="0.8"/><rect x="420.1" y="217.2" width="89" height="10.6" fill="none" stroke="#d3d3d3" stroke-width="0.8" rx="0.8"/><text x="407" y="224.7" font-size="5.4" textLength="11.4" lengthAdjust="spacingAndGlyphs">วันที่</text><clipPath id="c3"><rect x="420.1" y="217.2" width="89" height="10.6"/></clipPath><g clip-path="url(#c3)"><text x="421.4" y="222.7" font-size="5.5" textLength="80.5" lengthAdjust="spacingAndGlyphs">IIf([[มีข้อมูล] == 1 Or [มีข้อมูล] =</text><text x="421.4" y="228.8" font-size="5.5" textLength="77.9" lengthAdjust="spacingAndGlyphs">3) And [ประเภท] == 1, [ข้อมูลใบ</text></g><use href="#db" x="502.6" y="218.2"/><rect x="405.5" y="229" width="20.3" height="10.6" fill="none" stroke="#d3d3d3" stroke-width="0.8" rx="0.8"/><rect x="425.8" y="229" width="83.3" height="10.6" fill="none" stroke="#d3d3d3" stroke-width="0.8" rx="0.8"/><text x="407" y="236.5" font-size="5.4" textLength="17.8" lengthAdjust="spacingAndGlyphs">ผู้รับเงิน</text><clipPath id="c4"><rect x="425.8" y="229" width="83.3" height="10.6"/></clipPath><g clip-path="url(#c4)"><text x="427.1" y="234.5" font-size="5.5" textLength="72.2" lengthAdjust="spacingAndGlyphs">IIf([[มีข้อมูล] == 1 Or [มีข้อมูล]</text><text x="427.1" y="240.6" font-size="5.5" textLength="74" lengthAdjust="spacingAndGlyphs">1, IIf([ประเภท] == 1, [ข้อมูลใบ</text></g><use href="#db" x="502.6" y="230"/><rect x="246.6" y="248.8" width="17.3" height="11.6" fill="none" stroke="#d3d3d3" stroke-width="0.8" rx="0.8"/><text x="248" y="256.9" font-size="5.4" textLength="14.9" lengthAdjust="spacingAndGlyphs">ลูกค้า :</text><rect x="263.9" y="248.8" width="141.2" height="11.6" fill="none" stroke="#d3d3d3" stroke-width="0.8" rx="0.8"/><clipPath id="c5"><rect x="263.9" y="248.8" width="141.2" height="11.6"/></clipPath><g clip-path="url(#c5)"><text x="265.3" y="253.7" font-size="5.4" textLength="127" lengthAdjust="spacingAndGlyphs">[ข้อมูลลูกค้า.คำนำหน้า] + ' ' + [ข้อมูลลูกค้า.ชื่อ] + ' ' +</text><text x="265.3" y="259.9" font-size="5.4" textLength="50.4" lengthAdjust="spacingAndGlyphs">[ข้อมูลลูกค้า.นามสกุล]</text></g><use href="#db" x="399" y="249.6"/><rect x="405.1" y="249.2" width="26.8" height="10.6" fill="none" stroke="#d3d3d3" stroke-width="0.8" rx="0.8"/><text x="406.2" y="256.9" font-size="5.4" textLength="23.8" lengthAdjust="spacingAndGlyphs">เบอร์โทร.</text><rect x="431.9" y="249.2" width="77.2" height="10.6" fill="none" stroke="#d3d3d3" stroke-width="0.8" rx="0.8"/><text x="433.9" y="256.9" font-size="5.4" textLength="53.9" lengthAdjust="spacingAndGlyphs">[ข้อมูลลูกค้า.เบอร์ติดต่อ]</text><use href="#db" x="503" y="249.6"/><rect x="246.6" y="261" width="17.3" height="11.6" fill="none" stroke="#d3d3d3" stroke-width="0.8" rx="0.8"/><text x="248" y="268.5" font-size="5.4" textLength="12.3" lengthAdjust="spacingAndGlyphs">ที่อยู่ :</text><rect x="263.9" y="261" width="245.2" height="11.6" fill="none" stroke="#d3d3d3" stroke-width="0.8" rx="0.8"/><clipPath id="c6"><rect x="263.9" y="261" width="245.2" height="11.6"/></clipPath><g clip-path="url(#c6)"><text x="265.3" y="265.9" font-size="5.4" textLength="215.3" lengthAdjust="spacingAndGlyphs">[ข้อมูลลูกค้า.ที่อยู่1] + ' ' + [ข้อมูลลูกค้า.ที่อยู่2] + 'ต.' + [ข้อมูลลูกค้า.ตำบล] + 'อ.' + [ข้อมูล</text><text x="265.3" y="272.1" font-size="5.4" textLength="180.7" lengthAdjust="spacingAndGlyphs">ลูกค้า.อำเภอ] + 'จ.' + [ข้อมูลลูกค้า.จังหวัด] + ' ' + [ข้อมูลลูกค้า.รหัสไปรษณีย์]</text></g><use href="#db" x="503" y="262"/><text x="248.1" y="286.8" font-size="7" font-weight="700" fill="#111" textLength="16.2" lengthAdjust="spacingAndGlyphs">ลำดับ</text><text x="302.5" y="286.8" font-size="7" font-weight="700" fill="#111" textLength="35.5" lengthAdjust="spacingAndGlyphs">รายละเอียด</text><text x="376" y="286.8" font-size="7" font-weight="700" fill="#111" textLength="20.3" lengthAdjust="spacingAndGlyphs">จำนวน</text><text x="407.5" y="282.7" font-size="7" font-weight="700" fill="#111" textLength="15.9" lengthAdjust="spacingAndGlyphs">ราคา</text><text x="403.4" y="291.3" font-size="7" font-weight="700" fill="#111" textLength="24" lengthAdjust="spacingAndGlyphs">(หน่วย)</text><text x="439" y="282.7" font-size="7" font-weight="700" fill="#111" textLength="21.2" lengthAdjust="spacingAndGlyphs">ส่วนลด</text><text x="440" y="291.3" font-size="7" font-weight="700" fill="#111" textLength="18.9" lengthAdjust="spacingAndGlyphs">(บาท)</text><text x="476" y="286.8" font-size="7" font-weight="700" fill="#111" textLength="24.1" lengthAdjust="spacingAndGlyphs">ยอดรวม</text><rect x="246.6" y="295.4" width="186.3" height="10.2" fill="none" stroke="#e9e9e9" stroke-width="0.7" rx="0.8"/><text x="247.7" y="303" font-size="5.4" textLength="67.6" lengthAdjust="spacingAndGlyphs">[ข้อมูลใบเสร็จ.ชื่อกลุ่มใบเสร็จ]</text><rect x="432.9" y="295" width="76.2" height="11" fill="none" stroke="#d3d3d3" stroke-width="0.8" rx="0.8"/><clipPath id="c7"><rect x="432.9" y="295" width="76.2" height="11"/></clipPath><g clip-path="url(#c7)"><text x="443" y="300" font-size="5.4" textLength="64" lengthAdjust="spacingAndGlyphs">sumSum([ข้อมูลใบเสร็จ.รวม</text><text x="479.6" y="306.2" font-size="5.4" textLength="27.4" lengthAdjust="spacingAndGlyphs">หลังจากส่วนลด])</text></g><rect x="246.6" y="307" width="19.4" height="11.4" fill="none" stroke="#d3d3d3" stroke-width="0.8" rx="0.8"/><clipPath id="c8"><rect x="246.6" y="307" width="19.4" height="11.4"/></clipPath><g clip-path="url(#c8)"><text x="249.4" y="312.4" font-size="5.5" textLength="13" lengthAdjust="spacingAndGlyphs">IIf([[มี</text><text x="248.5" y="318.6" font-size="5.5" textLength="15.4" lengthAdjust="spacingAndGlyphs">ข้อมูล]</text></g><use href="#db" x="260.9" y="308.1"/><rect x="266" y="307" width="107.6" height="11.4" fill="none" stroke="#d3d3d3" stroke-width="0.8" rx="0.8"/><clipPath id="c9"><rect x="266" y="307" width="107.6" height="11.4"/></clipPath><g clip-path="url(#c9)"><text x="267.6" y="312.4" font-size="5.5" textLength="98.8" lengthAdjust="spacingAndGlyphs">IIf([[มีข้อมูล] == 1 Or [มีข้อมูล] == 3) An</text><text x="267.6" y="318.6" font-size="5.5" textLength="101.9" lengthAdjust="spacingAndGlyphs">[ประเภท] == 1, [ข้อมูลใบเสร็จ.ชื่อย่อยใบเส]</text></g><use href="#db" x="367.5" y="308.1"/><rect x="373.6" y="307" width="25.4" height="11.4" fill="none" stroke="#d3d3d3" stroke-width="0.8" rx="0.8"/><clipPath id="c10"><rect x="373.6" y="307" width="25.4" height="11.4"/></clipPath><g clip-path="url(#c10)"><text x="379" y="312.4" font-size="5.5" textLength="13" lengthAdjust="spacingAndGlyphs">IIf([[มี</text><text x="379.5" y="318.6" font-size="5.5" textLength="14.2" lengthAdjust="spacingAndGlyphs">ข้อมูล]</text></g><use href="#db" x="390.8" y="308.1"/><rect x="399" y="307" width="33.5" height="11.4" fill="none" stroke="#d3d3d3" stroke-width="0.8" rx="0.8"/><clipPath id="c11"><rect x="399" y="307" width="33.5" height="11.4"/></clipPath><g clip-path="url(#c11)"><text x="402" y="312.4" font-size="5.5" textLength="23.4" lengthAdjust="spacingAndGlyphs">IIf([[มีข้อมู</text><text x="405.5" y="318.6" font-size="5.5" textLength="23.9" lengthAdjust="spacingAndGlyphs">== 1 Or [มี</text></g><use href="#db" x="425.8" y="308.1"/><rect x="432.5" y="307" width="34.9" height="11.4" fill="none" stroke="#d3d3d3" stroke-width="0.8" rx="0.8"/><clipPath id="c12"><rect x="432.5" y="307" width="34.9" height="11.4"/></clipPath><g clip-path="url(#c12)"><text x="436.6" y="312.4" font-size="5.5" textLength="23.7" lengthAdjust="spacingAndGlyphs">IIf([[มีข้อมู</text><text x="440.4" y="318.6" font-size="5.5" textLength="24" lengthAdjust="spacingAndGlyphs">== 1 Or [มี</text></g><use href="#db" x="461.3" y="308.1"/><rect x="467.4" y="307" width="41.7" height="11.4" fill="none" stroke="#d3d3d3" stroke-width="0.8" rx="0.8"/><clipPath id="c13"><rect x="467.4" y="307" width="41.7" height="11.4"/></clipPath><g clip-path="url(#c13)"><text x="477.6" y="312.4" font-size="5.5" textLength="24.4" lengthAdjust="spacingAndGlyphs">IIf([[มีข้อมู</text><text x="480.6" y="318.6" font-size="5.5" textLength="24.4" lengthAdjust="spacingAndGlyphs">== 1 Or [มี</text></g><use href="#db" x="503" y="308.1"/><text x="246.8" y="324.4" font-size="5.5" textLength="87.1" lengthAdjust="spacingAndGlyphs">IIf([มีข้อมูล] == 1 Or [มีข้อมูล] == 3,</text><text x="246.8" y="330.5" font-size="5.5" textLength="78" lengthAdjust="spacingAndGlyphs">IIf([ประเภท] == 1, 'รับเงินโดย ' +</text><use href="#db" x="386.2" y="320.3"/><path d="M246.6 330.7H392.6M246.6 342.9H392.6M246.6 355.1H392.6M246.6 367.3H392.6M246.6 379.5H392.6M246.6 391.7H392.6M246.6 403.9H392.6" stroke="#c6c6c6" stroke-width="1" fill="none"/><path d="M392.6 330.7H509.1M392.6 342.9H509.1M392.6 355.1H509.1M392.6 367.3H509.1M392.6 379.5H509.1M392.6 391.7H509.1M392.6 403.9H509.1M392.6 416.1H509.1M392.6 428.3H509.1M392.6 318.8V428.3M433.9 318.8V428.3M509.1 318.8V428.3" stroke="#d6d6d6" stroke-width="0.8" fill="none"/><text x="394.4" y="327.2" font-size="5.4" textLength="18.3" lengthAdjust="spacingAndGlyphs">ยอดขาย</text><clipPath id="c14"><rect x="433.9" y="318.5" width="75.2" height="11.9"/></clipPath><g clip-path="url(#c14)"><text x="448.8" y="324.5" font-size="5.5" textLength="51.8" lengthAdjust="spacingAndGlyphs">IIf([[มีข้อมูล] == 1 Or</text><text x="442" y="330.4" font-size="5.5" textLength="64.9" lengthAdjust="spacingAndGlyphs">ข้อมูล] == 3) And [ประเภท]</text></g><use href="#db" x="502.6" y="319.6"/><text x="394.4" y="339.4" font-size="5.4" textLength="15.6" lengthAdjust="spacingAndGlyphs">ส่วนลด</text><clipPath id="c15"><rect x="433.9" y="330.7" width="75.2" height="11.9"/></clipPath><g clip-path="url(#c15)"><text x="448.8" y="336.7" font-size="5.5" textLength="51.8" lengthAdjust="spacingAndGlyphs">IIf([[มีข้อมูล] == 1 Or</text><text x="442" y="342.6" font-size="5.5" textLength="64.9" lengthAdjust="spacingAndGlyphs">ข้อมูล] == 3) And [ประเภท]</text></g><use href="#db" x="502.6" y="331.8"/><text x="394.4" y="351.6" font-size="5.4" textLength="21.3" lengthAdjust="spacingAndGlyphs">รับมัดจำ *</text><clipPath id="c16"><rect x="433.9" y="342.9" width="75.2" height="11.9"/></clipPath><g clip-path="url(#c16)"><text x="448.8" y="348.9" font-size="5.5" textLength="51.8" lengthAdjust="spacingAndGlyphs">IIf([[มีข้อมูล] == 1 Or</text><text x="442" y="354.8" font-size="5.5" textLength="64.9" lengthAdjust="spacingAndGlyphs">ข้อมูล] == 3) And [ประเภท]</text></g><use href="#db" x="502.6" y="344"/><text x="394.4" y="363.8" font-size="5.4" textLength="26.4" lengthAdjust="spacingAndGlyphs">คืน/ใช้มัดจำ</text><clipPath id="c17"><rect x="433.9" y="355.1" width="75.2" height="11.9"/></clipPath><g clip-path="url(#c17)"><text x="448.8" y="361.1" font-size="5.5" textLength="51.8" lengthAdjust="spacingAndGlyphs">IIf([[มีข้อมูล] == 1 Or</text><text x="442" y="367" font-size="5.5" textLength="64.9" lengthAdjust="spacingAndGlyphs">ข้อมูล] == 3) And [ประเภท]</text></g><use href="#db" x="502.6" y="356.2"/><text x="394.4" y="376" font-size="5.4" textLength="37.6" lengthAdjust="spacingAndGlyphs">จ่ายยอดค้างชำระ</text><clipPath id="c18"><rect x="433.9" y="367.3" width="75.2" height="11.9"/></clipPath><g clip-path="url(#c18)"><text x="448.8" y="373.3" font-size="5.5" textLength="51.8" lengthAdjust="spacingAndGlyphs">IIf([[มีข้อมูล] == 1 Or</text><text x="442" y="379.2" font-size="5.5" textLength="64.9" lengthAdjust="spacingAndGlyphs">ข้อมูล] == 3) And [ประเภท]</text></g><use href="#db" x="502.6" y="368.4"/><text x="394.4" y="388.2" font-size="5.4" textLength="18.9" lengthAdjust="spacingAndGlyphs">ค้างชำระ</text><clipPath id="c19"><rect x="433.9" y="379.5" width="75.2" height="11.9"/></clipPath><g clip-path="url(#c19)"><text x="448.8" y="385.5" font-size="5.5" textLength="51.8" lengthAdjust="spacingAndGlyphs">IIf([[มีข้อมูล] == 1 Or</text><text x="442" y="391.4" font-size="5.5" textLength="64.9" lengthAdjust="spacingAndGlyphs">ข้อมูล] == 3) And [ประเภท]</text></g><use href="#db" x="502.6" y="380.6"/><text x="394.4" y="400.4" font-size="5.4" textLength="17.9" lengthAdjust="spacingAndGlyphs">รวมสุทธิ</text><clipPath id="c20"><rect x="433.9" y="391.7" width="75.2" height="11.9"/></clipPath><g clip-path="url(#c20)"><text x="448.8" y="397.7" font-size="5.5" textLength="51.8" lengthAdjust="spacingAndGlyphs">IIf([[มีข้อมูล] == 1 Or</text><text x="442" y="403.6" font-size="5.5" textLength="64.9" lengthAdjust="spacingAndGlyphs">ข้อมูล] == 3) And [ประเภท]</text></g><use href="#db" x="502.6" y="392.8"/><text x="394.4" y="412.6" font-size="5.4" textLength="12.1" lengthAdjust="spacingAndGlyphs">รับเงิน</text><clipPath id="c21"><rect x="433.9" y="403.9" width="75.2" height="11.9"/></clipPath><g clip-path="url(#c21)"><text x="448.8" y="409.9" font-size="5.5" textLength="51.8" lengthAdjust="spacingAndGlyphs">IIf([[มีข้อมูล] == 1 Or</text><text x="442" y="415.8" font-size="5.5" textLength="64.9" lengthAdjust="spacingAndGlyphs">ข้อมูล] == 3) And [ประเภท]</text></g><use href="#db" x="502.6" y="405"/><text x="394.4" y="424.8" font-size="5.4" textLength="18" lengthAdjust="spacingAndGlyphs">เงินทอน</text><clipPath id="c22"><rect x="433.9" y="416.1" width="75.2" height="11.9"/></clipPath><g clip-path="url(#c22)"><text x="448.8" y="422.1" font-size="5.5" textLength="51.8" lengthAdjust="spacingAndGlyphs">IIf([[มีข้อมูล] == 1 Or</text><text x="442" y="428" font-size="5.5" textLength="64.9" lengthAdjust="spacingAndGlyphs">ข้อมูล] == 3) And [ประเภท]</text></g><use href="#db" x="502.6" y="417.2"/><clipPath id="c23"><rect x="246.6" y="403.7" width="145.8" height="12.2"/></clipPath><g clip-path="url(#c23)"><text x="246.6" y="409.8" font-size="5.5" textLength="139.3" lengthAdjust="spacingAndGlyphs">IIf([[มีข้อมูล] == 1 Or [มีข้อมูล] == 3) And [ประเภท] == 1,</text><text x="246.6" y="416" font-size="5.5" textLength="144" lengthAdjust="spacingAndGlyphs">[ข้อความหมดแล้ว], IIf([[มีข้อมูล] == 2 Or [มีข้อมูล] == 3) And</text></g><use href="#db" x="386.8" y="406.3"/><rect x="246.1" y="433.3" width="46" height="10.1" fill="none" stroke="#d3d3d3" stroke-width="0.8" rx="0.8"/><text x="247.3" y="440.5" font-size="5.4" textLength="43.4" lengthAdjust="spacingAndGlyphs">นัดหมายครั้งถัดไป :</text><rect x="292.1" y="433.3" width="51.8" height="10.1" fill="none" stroke="#d3d3d3" stroke-width="0.8" rx="0.8"/><clipPath id="c24"><rect x="292.1" y="433.3" width="51.8" height="10.1"/></clipPath><g clip-path="url(#c24)"><text x="293.5" y="437.7" font-size="5.4" textLength="42.2" lengthAdjust="spacingAndGlyphs">[ข้อมูลนัดหมาย.วันที่</text><text x="293.5" y="443.7" font-size="5.4" textLength="8.7" lengthAdjust="spacingAndGlyphs">นัด]</text></g><use href="#db" x="337" y="433.6"/><rect x="343.9" y="433.3" width="16.6" height="10.1" fill="none" stroke="#d3d3d3" stroke-width="0.8" rx="0.8"/><text x="345.5" y="440.5" font-size="5.4" textLength="13.1" lengthAdjust="spacingAndGlyphs">เวลา :</text><rect x="360.5" y="433.3" width="58.5" height="10.1" fill="none" stroke="#d3d3d3" stroke-width="0.8" rx="0.8"/><clipPath id="c25"><rect x="360.5" y="433.3" width="58.5" height="10.1"/></clipPath><g clip-path="url(#c25)"><text x="361.5" y="437.7" font-size="5.5" textLength="50.7" lengthAdjust="spacingAndGlyphs">FormatString('{0:HH:</text><text x="361.5" y="443.7" font-size="5.5" textLength="38.5" lengthAdjust="spacingAndGlyphs">m น.}',[ข้อมูลนัด</text></g><use href="#db" x="413.2" y="433.6"/><rect x="246.1" y="444.6" width="38.1" height="25.4" fill="none" stroke="#d3d3d3" stroke-width="0.8" rx="0.8"/><text x="247.3" y="448.9" font-size="5.4" textLength="35" lengthAdjust="spacingAndGlyphs">หมายเหตุที่นัด :</text><rect x="284.2" y="444.6" width="134.8" height="25.4" fill="none" stroke="#d3d3d3" stroke-width="0.8" rx="0.8"/><text x="285.5" y="448.9" font-size="5.4" textLength="89.4" lengthAdjust="spacingAndGlyphs">[ข้อมูลนัดหมาย.ชื่อประเภทการนัดหมาย]</text><use href="#db" x="413.2" y="445.4"/><rect x="425.5" y="440.5" width="72.2" height="24.1" fill="none" stroke="#d3d3d3" stroke-width="0.8" rx="1.2"/><text x="452.3" y="461" font-size="5.6" font-weight="700" textLength="18.6" lengthAdjust="spacingAndGlyphs">ผู้รับเงิน</text></g></g></svg>
</body></html>
